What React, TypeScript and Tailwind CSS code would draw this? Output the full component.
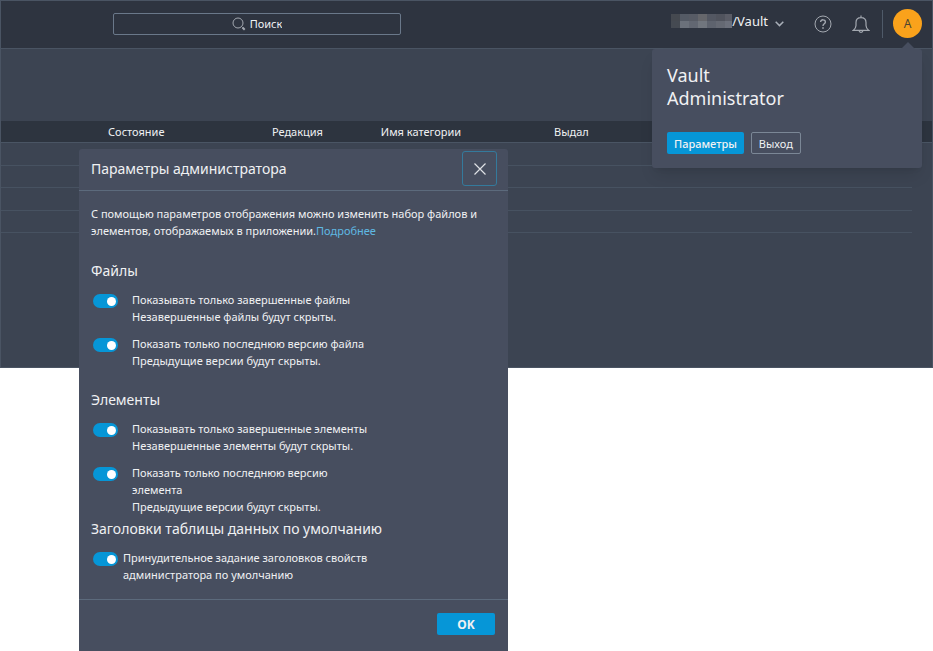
import { ReactNode } from 'react'

const rows = [1, 2, 3, 4]
const mosaic = [
    'bg-[#454950]', 'bg-[#545a65]', 'bg-[#575b65]', 'bg-[#65666b]', 'bg-[#535762]', 'bg-[#50535d]', 'bg-[#5a5c66]',
    'bg-[#454a52]', 'bg-[#6b717b]', 'bg-[#626772]', 'bg-[#71767e]', 'bg-[#5e636e]', 'bg-[#656973]', 'bg-[#6c707b]',
]

const TopBar = () => {
    return (
        <header className="flex h-[49px] items-center border-y border-[#4a5463] bg-[#2e3440] pb-0.5">
            <label className="ml-[12%] flex h-[22px] w-[31%] items-center justify-center gap-1 rounded-[2px] border border-[#6a788a]">
                <svg className="size-3.5" viewBox="0 0 14 14" fill="none" stroke="#a3a8b0">
                    <circle cx="6" cy="6" r="5" />
                    <path d="M9.5 9.5l1 1" />
                    <path d="M10.5 10.5l2.2 2.2" strokeWidth="2" />
                </svg>
                <input type="search" aria-label="Поиск" placeholder="Поиск" className="field-sizing-content outline-none placeholder:text-[#f0f1f3]" />
            </label>
            <div className="ml-auto flex items-center pr-[10px]">
                <button type="button" className="mr-[30px] mb-1 flex items-center text-[13px]">
                    <span className="mb-0.5 grid w-[61px] grid-cols-[repeat(7,9px)] overflow-hidden">
                        {mosaic.map((color, i) => <span key={i} className={`h-[7px] ${color}`} />)}
                    </span>
                    /Vault
                    <svg className="mt-1 ml-[7px] w-[9px]" viewBox="0 0 9 6" fill="none" stroke="#a9afb8" strokeWidth="1.5">
                        <path d="M.7.8l3.8 3.8L8.3.8" />
                    </svg>
                </button>
                <button type="button" aria-label="Справка" className="mr-5">
                    <svg className="size-[18px]" viewBox="0 0 18 18" fill="none" stroke="#a3a8b0">
                        <circle cx="9" cy="9" r="8" />
                        <path d="M6.6 7C6.6 4 11.5 4.2 11.4 7c0 1.8-2.4 1.8-2.4 4" strokeWidth="1.4" />
                        <path d="M9 12.2v1.6" strokeWidth="1.6" />
                    </svg>
                </button>
                <button type="button" aria-label="Уведомления" className="mr-3">
                    <svg className="size-[18px]" viewBox="0 0 18 18" fill="none" stroke="#a3a8b0" strokeWidth="1.2">
                        <path d="M1.2 15.4h15.6c-2-1.5-2.8-2.6-2.8-4.9V7.5C14 4.5 12 2.6 9 2.6S4 4.5 4 7.5v3c0 2.3-.8 3.4-2.8 4.9zM9 .5v2.1M7 15.5c.3 2.5 3.7 2.5 4 0" />
                    </svg>
                </button>
                <span className="mr-[10px] h-7 w-px bg-[#4f5a69]" />
                <button type="button" className="size-[29px] rounded-full bg-[#faa21b] text-[12px] text-[#4d4530]">A</button>
            </div>
        </header>
    )
}

const FilesTable = () => {
    return (
        <table className="w-full table-fixed border-collapse text-left">
            <colgroup>
                <col className="w-[11.5%]" />
                <col className="w-[17.6%]" />
                <col className="w-[11.7%]" />
                <col className="w-[18.6%]" />
                <col />
                <col className="w-5" />
            </colgroup>
            <thead className="border-b border-[#4a5564] bg-[#2d343f]">
                <tr className="h-[21px]">
                    <th />
                    <th className="font-normal">Состояние</th>
                    <th className="font-normal">Редакция</th>
                    <th className="font-normal">Имя категории</th>
                    <th className="font-normal">Выдал</th>
                    <th />
                </tr>
            </thead>
            <tbody>
                {rows.map((row) => (
                    <tr key={row} className="odd:h-[23px] even:h-[22px]">
                        <td colSpan={5} className="border-b border-[#475261]" />
                        <td />
                    </tr>
                ))}
            </tbody>
        </table>
    )
}

const UserMenu = () => {
    return (
        <div className="absolute top-[49px] right-[11px] w-[270px] rounded-[3px] bg-[#474e5f] px-[15px] pt-[15px] pb-[14px] shadow-lg">
            <svg className="absolute -top-[7px] right-[7px] w-[14px]" viewBox="0 0 14 7">
                <path d="M0 7l7-7 7 7z" fill="#474e5f" />
            </svg>
            <p className="w-32 text-lg leading-[23px]">Vault Administrator</p>
            <div className="mt-[22px] flex gap-[7px]">
                <button type="button" className="h-[22px] rounded-[2px] bg-[#0696d7] px-[7px] font-medium">Параметры</button>
                <button type="button" className="h-[22px] rounded-[2px] border border-[#7b8796] px-[7px]">Выход</button>
            </div>
        </div>
    )
}

type ToggleProps = {
    children: ReactNode
    className?: string
}

const Toggle = ({ children, className = 'gap-[14px]' }: ToggleProps) => {
    return (
        <label className={`flex items-start pl-0.5 ${className}`}>
            <input
                type="checkbox"
                role="switch"
                defaultChecked
                className="mt-[3px] flex h-[14px] w-[25px] shrink-0 appearance-none items-center rounded-full bg-[#7b8796] px-[2px] before:size-[9px] before:rounded-full before:bg-white checked:justify-end checked:bg-[#0696d7]"
            />
            <span className="w-[246px]">{children}</span>
        </label>
    )
}

const AdminDialog = () => {
    return (
        <div role="dialog" aria-labelledby="dialog-title" className="absolute top-[149px] left-[79px] w-[429px] rounded-t-[3px] bg-[#474e5f]">
            <div className="flex h-[42px] items-center justify-between border-b border-[#5c6a7c] pr-[11px] pb-0.5 pl-3">
                <h2 id="dialog-title" className="text-sm">Параметры администратора</h2>
                <button type="button" aria-label="Закрыть" className="flex size-[35px] items-center justify-center rounded-[3px] border border-[#347a9c]">
                    <svg className="size-3" viewBox="0 0 12 12" stroke="#dfe1e5" strokeWidth="1.2">
                        <path d="M.5.5l11 11M11.5.5l-11 11" />
                    </svg>
                </button>
            </div>
            <div className="px-3 pt-[14px] pb-4">
                <p>
                    С помощью параметров отображения можно изменить набор файлов и элементов, отображаемых в приложении.
                    <a href="#more" className="text-[#5fb8e2]">Подробнее</a>
                </p>
                <h3 className="mt-[22px] text-sm">Файлы</h3>
                <div className="mt-[10px] flex flex-col gap-[10px]">
                    <Toggle>Показывать только завершенные файлы<br />Незавершенные файлы будут скрыты.</Toggle>
                    <Toggle>Показать только последнюю версию файла<br />Предыдущие версии будут скрыты.</Toggle>
                </div>
                <h3 className="mt-[21px] text-sm">Элементы</h3>
                <div className="mt-[10px] flex flex-col gap-[10px]">
                    <Toggle>Показывать только завершенные элементы<br />Незавершенные элементы будут скрыты.</Toggle>
                    <Toggle>Показать только последнюю версию элемента<br />Предыдущие версии будут скрыты.</Toggle>
                </div>
                <h3 className="mt-1 text-sm">Заголовки таблицы данных по умолчанию</h3>
                <div className="mt-[10px]">
                    <Toggle className="gap-[5px]">Принудительное задание заголовков свойств администратора по умолчанию</Toggle>
                </div>
            </div>
            <div className="flex justify-end border-t border-[#5c6a7c] px-[13px] pt-[13px] pb-4">
                <button type="button" className="h-[22px] w-[58px] rounded-[2px] bg-[#0696d7] text-[12px] font-bold">OK</button>
            </div>
        </div>
    )
}

const App = () => {
    return (
        <div className="relative min-h-screen bg-white font-['Noto_Sans',sans-serif] text-[11px] leading-[17px] text-[#f0f1f3]">
            <main className="border-x border-b border-[#4a5463] bg-[#3c4452] pb-[134px]">
                <TopBar />
                <div className="h-[72px]" />
                <FilesTable />
            </main>
            <UserMenu />
            <AdminDialog />
        </div>
    )
}

export default App
